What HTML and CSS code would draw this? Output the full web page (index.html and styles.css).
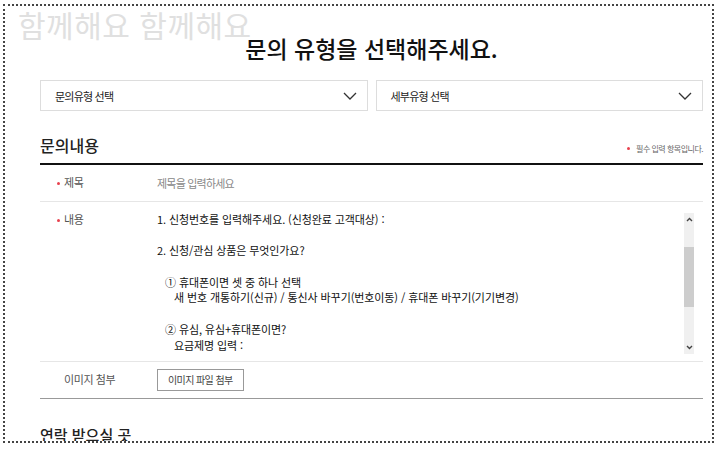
FILE: index.html
```html
<!DOCTYPE html>
<html lang="ko">
  <head>
    <meta charset="UTF-8" />
    <meta name="viewport" content="width=device-width, initial-scale=1.0" />
    <title>1:1 문의</title>
    <link rel="stylesheet" href="styles.css">
  </head>
  <body>
    <div class="page">
      <div class="watermark">함께해요 함께해요</div>
      <h1 class="title">문의 유형을 선택해주세요.</h1>

      <div class="selects">
        <div class="select">
          <span>문의유형 선택</span>
          <svg width="14" height="8" viewBox="0 0 14 8"><polyline points="1,1 7,7 13,1" fill="none" stroke="#333" stroke-width="1.3" /></svg>
        </div>
        <div class="select">
          <span>세부유형 선택</span>
          <svg width="14" height="8" viewBox="0 0 14 8"><polyline points="1,1 7,7 13,1" fill="none" stroke="#333" stroke-width="1.3" /></svg>
        </div>
      </div>

      <div class="section-head">
        <h2>문의내용</h2>
        <p class="required">필수 입력 항목입니다.</p>
      </div>

      <div class="form">
        <div class="row">
          <div class="label req">제목</div>
          <div class="placeholder">제목을 입력하세요</div>
        </div>
        <div class="row row-memo">
          <div class="label req">내용</div>
          <div class="memo">
            <p>1. 신청번호를 입력해주세요. (신청완료 고객대상) :</p>
            <p>2. 신청/관심 상품은 무엇인가요?</p>
            <div class="opt">
              <p>① 휴대폰이면 셋 중 하나 선택</p>
              <p class="indent">새 번호 개통하기(신규) / 통신사 바꾸기(번호이동) / 휴대폰 바꾸기(기기변경)</p>
            </div>
            <div class="opt">
              <p>② 유심, 유심+휴대폰이면?</p>
              <p class="indent">요금제명 입력 :</p>
            </div>
            <p>3. 문의 내용을 입력해주세요.</p>
          </div>
          <div class="scrollbar">
            <div class="arrow">
              <svg width="7" height="5" viewBox="0 0 7 5"><polyline points="1,4 3.5,1.5 6,4" fill="none" stroke="#444" stroke-width="1.4" /></svg>
            </div>
            <div class="thumb"></div>
            <div class="track"></div>
            <div class="arrow">
              <svg width="7" height="5" viewBox="0 0 7 5"><polyline points="1,1 3.5,3.5 6,1" fill="none" stroke="#444" stroke-width="1.4" /></svg>
            </div>
          </div>
        </div>
        <div class="row row-last">
          <div class="label">이미지 첨부</div>
          <div class="file-btn">이미지 파일 첨부</div>
        </div>
      </div>

      <h2 class="contact">연락 받으실 곳</h2>
    </div>
  </body>
</html>
```

FILE: styles.css
```css
body {
  margin: 0;
  background-color: #fff;
  font-family: "Noto Sans CJK KR", "Noto Sans", sans-serif;
  color: #222;
}
.page {
  position: relative;
  box-sizing: border-box;
  height: 439px;
  margin: 4px 6px 0 3px;
  padding: 0 9px 0 35px;
  border: 2px dotted #444;
  overflow: hidden;
}
.watermark {
  position: absolute;
  top: 0;
  left: 13px;
  font-size: 30px;
  line-height: 36px;
  letter-spacing: 0.5px;
  color: #e0e0e0;
}
.title {
  position: relative;
  margin: 27px 0 0;
  font-size: 23px;
  line-height: 30px;
  font-weight: 500;
  text-align: center;
  color: #111;
}
.selects {
  display: flex;
  gap: 8px;
  margin-top: 17px;
}
.select {
  flex: 1;
  display: flex;
  align-items: center;
  justify-content: space-between;
  box-sizing: border-box;
  height: 31px;
  padding: 0 10px 0 14px;
  border: 1px solid #ddd;
  font-size: 11px;
  letter-spacing: -0.8px;
}
.section-head {
  display: flex;
  justify-content: space-between;
  align-items: flex-end;
  margin-top: 23px;
  padding-bottom: 7px;
}
.section-head h2 {
  margin: 0;
  font-size: 16px;
  line-height: 22px;
  font-weight: 500;
}
.required {
  margin: 0;
  font-size: 8px;
  line-height: 14px;
  letter-spacing: -0.5px;
  color: #666;
}
.required::before {
  content: "";
  display: inline-block;
  width: 3px;
  height: 3px;
  margin: 0 6px 2px 0;
  border-radius: 50%;
  background-color: #e8414e;
}
.form {
  border-top: 2px solid #111;
}
.row {
  display: flex;
  align-items: center;
  height: 36px;
  border-bottom: 1px solid #e6e6e6;
  font-size: 11px;
}
.label {
  box-sizing: border-box;
  flex: none;
  width: 117px;
  padding-left: 24px;
  color: #555;
  line-height: 15.7px;
  letter-spacing: -0.4px;
}
.label.req {
  padding-left: 17px;
}
.label.req::before {
  content: "";
  display: inline-block;
  width: 3px;
  height: 3px;
  margin: 0 4px 2px 0;
  border-radius: 50%;
  background-color: #e8414e;
}
.placeholder {
  color: #888;
  letter-spacing: -0.8px;
}
.row-memo {
  align-items: flex-start;
  height: auto;
  padding: 10px 0 7px;
}
.memo {
  flex: 1;
  height: 142px;
  overflow: hidden;
  line-height: 15.7px;
  color: #111;
  letter-spacing: -0.1px;
}
.memo p {
  margin: 0;
}
.memo > p,
.opt {
  margin-bottom: 15.7px;
}
.opt {
  padding-left: 8px;
}
.indent {
  padding-left: 9px;
}
.scrollbar {
  display: flex;
  flex-direction: column;
  width: 10px;
  height: 141px;
  margin: 1px 9px 0 0;
  background-color: #f0f0f0;
}
.arrow {
  display: flex;
  align-items: center;
  justify-content: center;
  height: 13px;
}
.thumb {
  height: 60px;
  margin-top: 21px;
  background-color: #cdcdcd;
}
.track {
  flex: 1;
}
.row-last {
  border-bottom-color: #999;
}
.file-btn {
  padding: 0 10px;
  border: 1px solid #999;
  font-size: 10px;
  line-height: 20px;
  letter-spacing: -0.6px;
  white-space: nowrap;
  color: #444;
}
.contact {
  margin: 25px 0 0;
  font-size: 15px;
  line-height: 22px;
  font-weight: 500;
}
```
